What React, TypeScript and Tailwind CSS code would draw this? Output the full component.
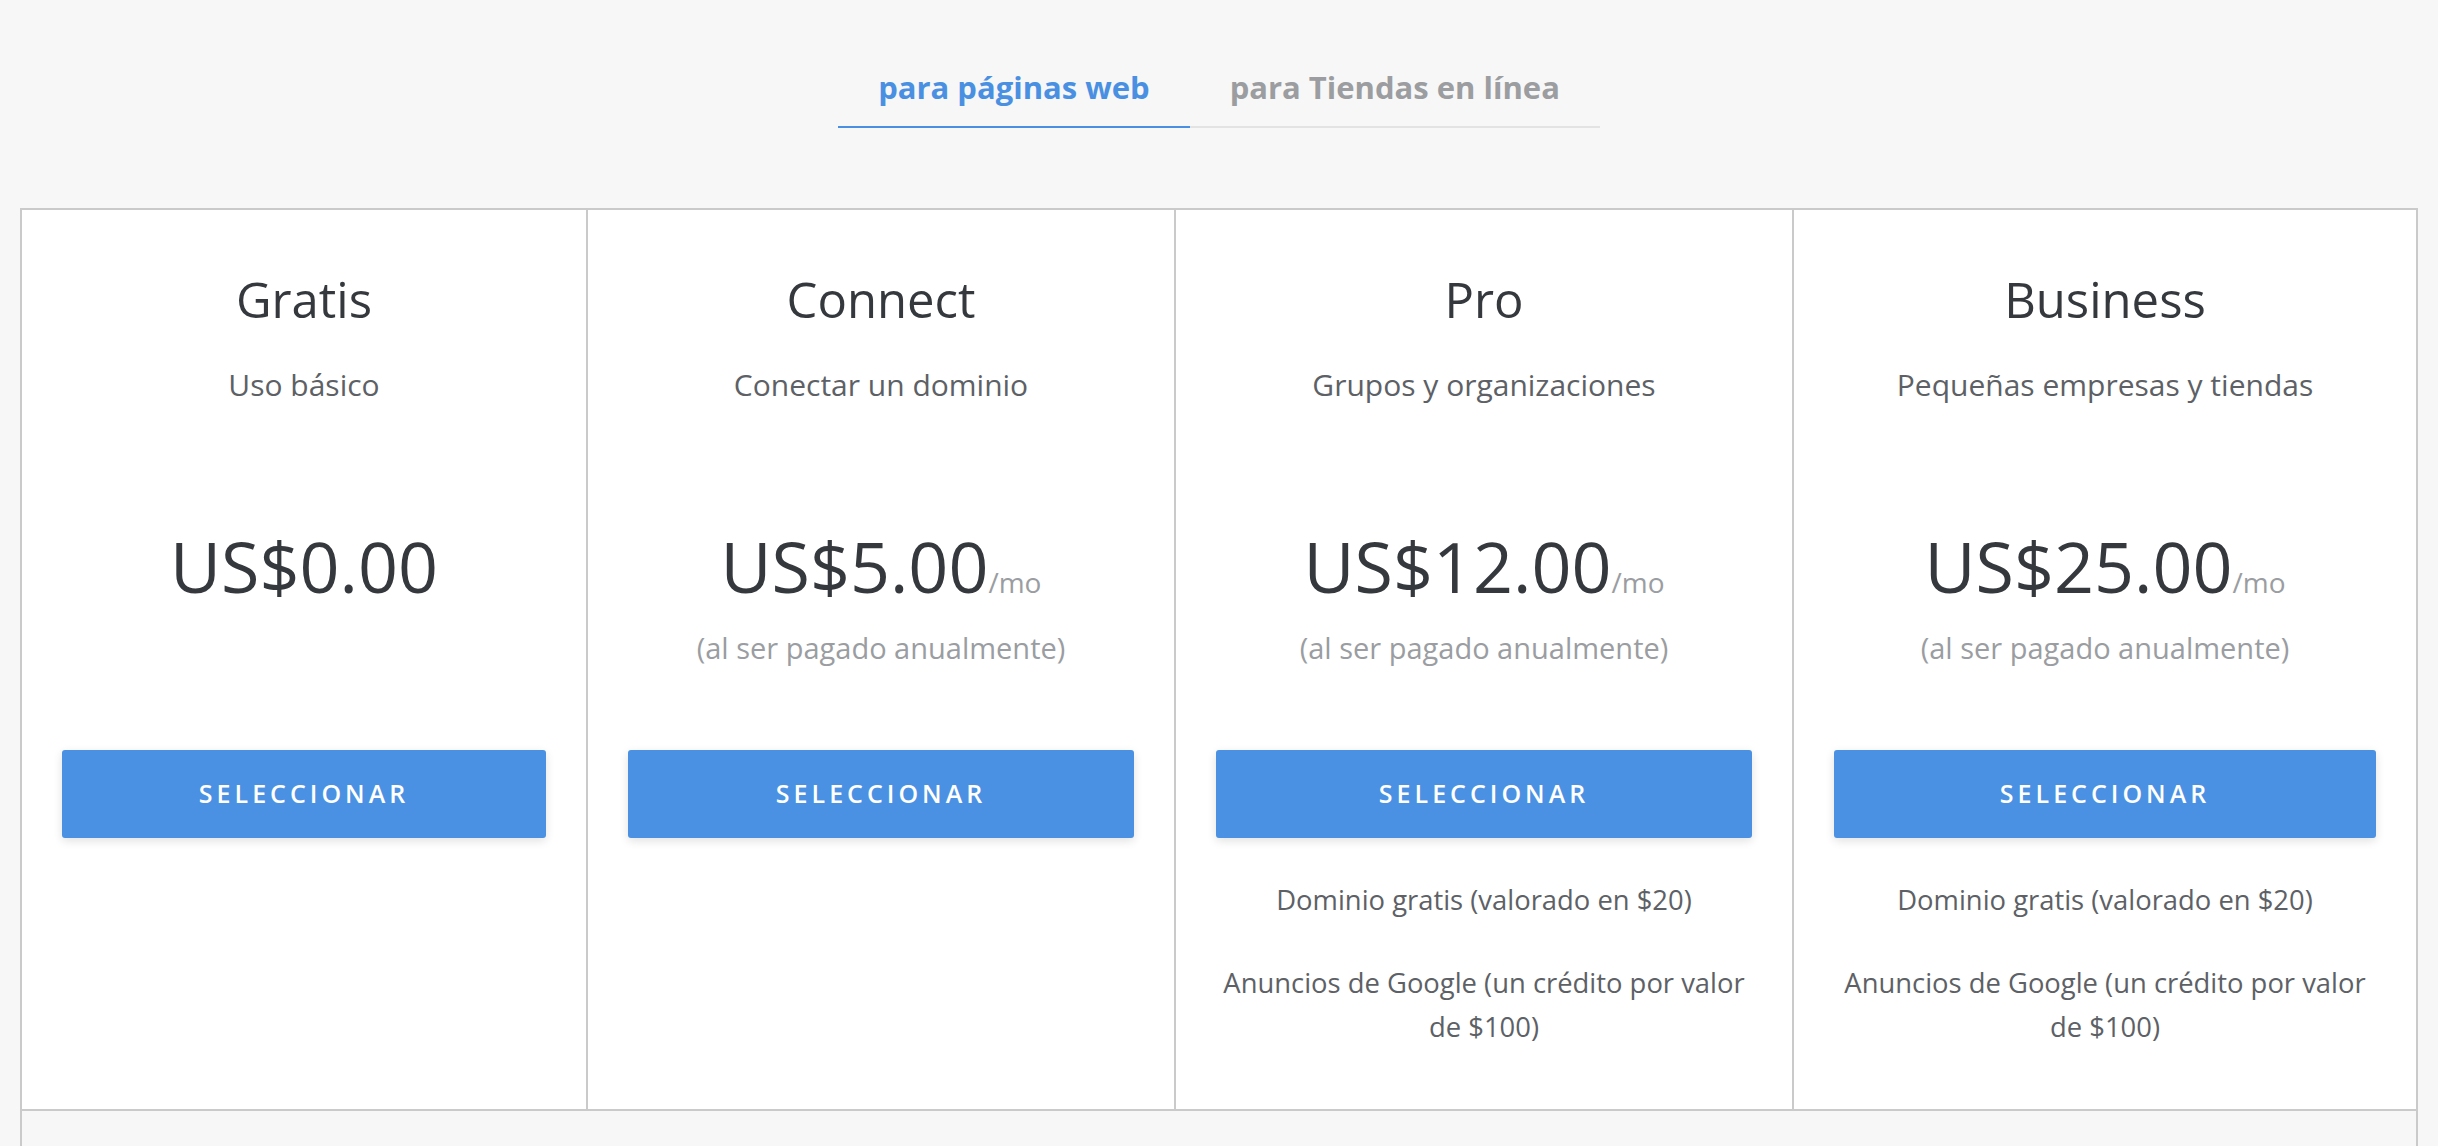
import React from 'react'

type Plan = {
  name: string
  tagline: string
  price: string
  monthly: boolean
  features: string[]
}

const plans: Plan[] = [
  { name: 'Gratis', tagline: 'Uso básico', price: 'US$0.00', monthly: false, features: [] },
  { name: 'Connect', tagline: 'Conectar un dominio', price: 'US$5.00', monthly: true, features: [] },
  {
    name: 'Pro',
    tagline: 'Grupos y organizaciones',
    price: 'US$12.00',
    monthly: true,
    features: ['Dominio gratis (valorado en $20)', 'Anuncios de Google (un crédito por valor de $100)'],
  },
  {
    name: 'Business',
    tagline: 'Pequeñas empresas y tiendas',
    price: 'US$25.00',
    monthly: true,
    features: ['Dominio gratis (valorado en $20)', 'Anuncios de Google (un crédito por valor de $100)'],
  },
]

const PlanColumn = ({ plan, first }: { plan: Plan; first: boolean }) => {
  return (
    <div className={`flex flex-col items-center bg-white px-[40px] pt-[60px] pb-[60px] text-center ${first ? '' : 'border-l-2 border-[#cacaca]'}`}>
      <h2 className="text-[49px] leading-[58px] text-[#35393d]">{plan.name}</h2>
      <p className="mt-[39px] text-[30px] leading-[36px] text-[#5d6166]">{plan.tagline}</p>
      <div className="mt-[121px] h-[226px] w-full">
        <div className="flex items-baseline justify-center">
          <span className="text-[70px] leading-[84px] text-[#35393d]">{plan.price}</span>
          {plan.monthly && <span className="text-[28px] text-[#9a9da1]">/mo</span>}
        </div>
        {plan.monthly && (
          <p className="mt-[22px] text-[29px] leading-[36px] text-[#9a9da1]">(al ser pagado anualmente)</p>
        )}
      </div>
      <button className="h-[88px] w-full rounded-[3px] bg-[#4a91e3] text-[25px] font-semibold tracking-[4px] text-white shadow-[0_3px_10px_rgba(0,0,0,0.12)]">
        SELECCIONAR
      </button>
      {plan.features.length > 0 && (
        <div className="mt-[40px] flex flex-col gap-[39px]">
          {plan.features.map((f) => (
            <p key={f} className="text-[27.4px] leading-[44px] text-[#5d6166]">{f}</p>
          ))}
        </div>
      )}
    </div>
  )
}

const App = () => {
  return (
    <div className="min-h-screen bg-[#f7f7f7] px-[20px] pt-[69px]" style={{ fontFamily: '"Open Sans", Lato, sans-serif' }}>
      <div className="flex justify-center">
        <div className="flex">
          <div className="border-b-2 border-[#4a90e2] px-[40px] pb-[21px] text-[31px] font-bold leading-[36px] text-[#4a90e2]">para páginas web</div>
          <div className="border-b-2 border-[#e3e3e3] px-[40px] pb-[21px] text-[31px] font-bold leading-[36px] text-[#9b9da0]">para Tiendas en línea</div>
        </div>
      </div>
      <div className="mt-[80px] border-x-2 border-[#cacaca]">
        <div className="grid grid-cols-[564px_588px_618px_1fr] border-y-2 border-[#cacaca]">
          {plans.map((p, i) => (
            <PlanColumn key={p.name} plan={p} first={i === 0} />
          ))}
        </div>
        <div className="h-[60px]" />
      </div>
    </div>
  )
}

export default App
